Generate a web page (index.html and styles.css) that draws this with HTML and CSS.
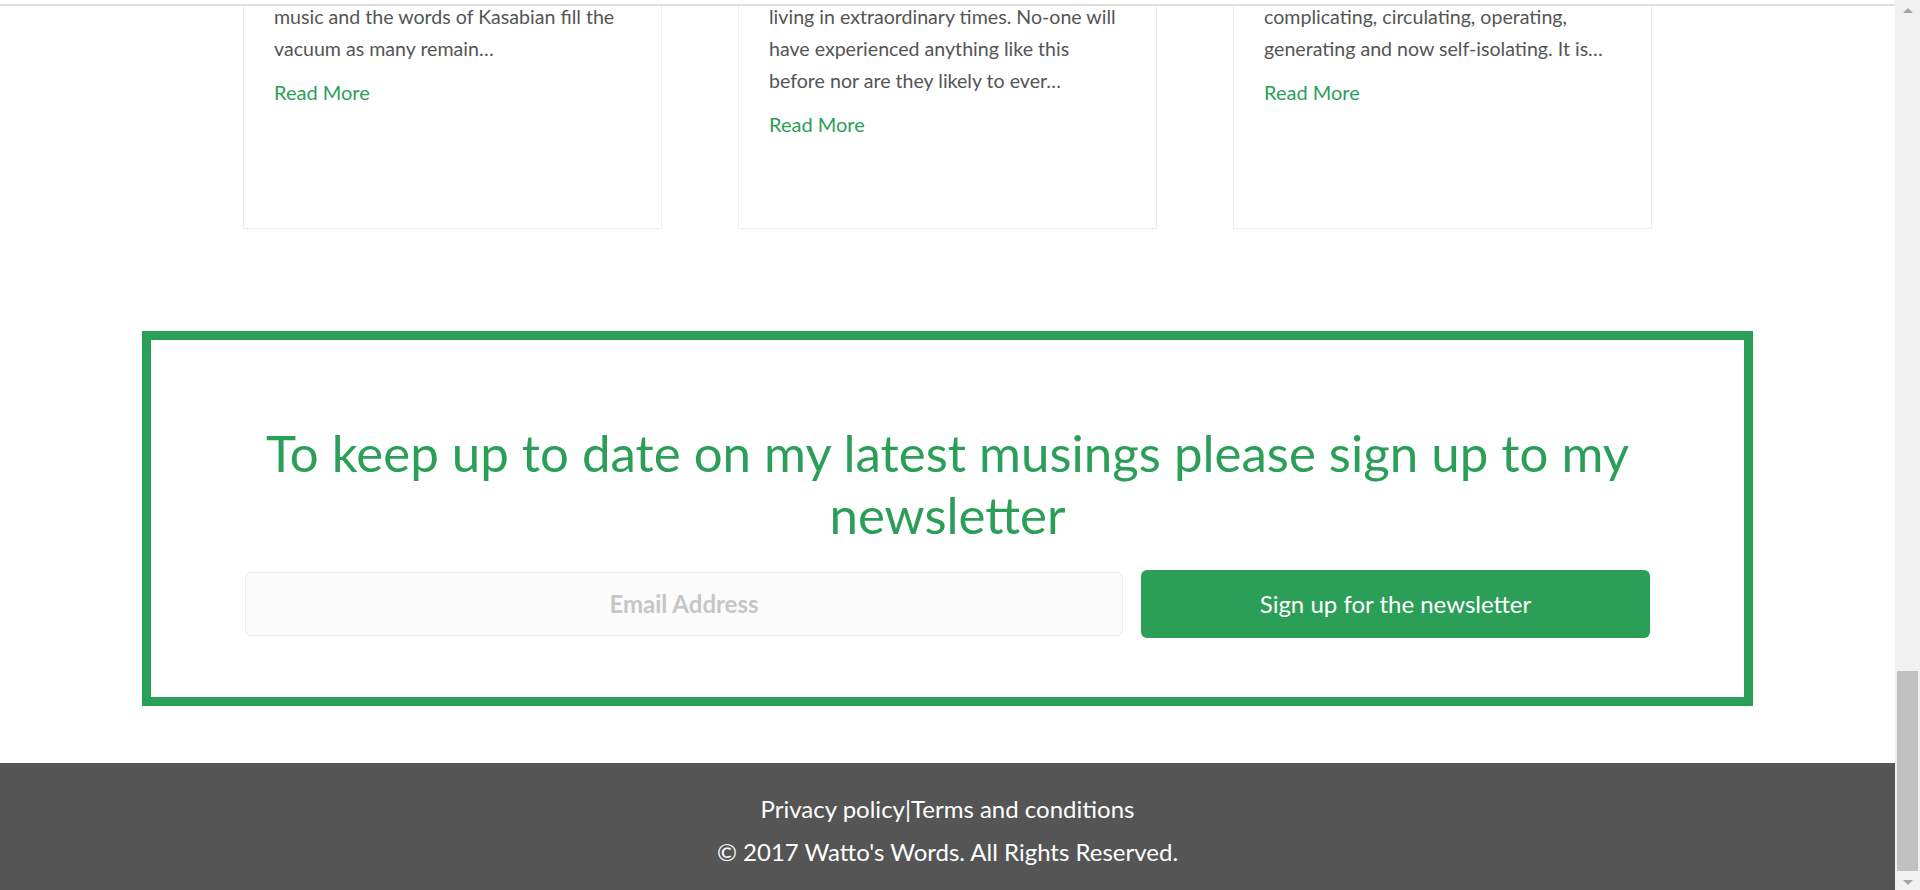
FILE: index.html
```html
<!DOCTYPE html>
<html lang="en">
<head>
<meta charset="utf-8">
<title>Watto's Words</title>
<link rel="stylesheet" href="styles.css">
</head>
<body>
<div class="topbar"></div>
<div class="scrollbar">
  <span class="arrow arrow-up"></span>
  <span class="track"><span class="thumb"></span></span>
  <span class="arrow arrow-down"></span>
</div>
<main class="page">
  <section class="posts">
    <article class="card">
      <p class="excerpt">music and the words of Kasabian fill the<br>vacuum as many remain…</p>
      <a class="more" href="#">Read More</a>
    </article>
    <article class="card">
      <p class="excerpt">living in extraordinary times. No-one will<br>have experienced anything like this<br>before nor are they likely to ever…</p>
      <a class="more" href="#">Read More</a>
    </article>
    <article class="card">
      <p class="excerpt">complicating, circulating, operating,<br>generating and now self-isolating. It is…</p>
      <a class="more" href="#">Read More</a>
    </article>
  </section>
  <section class="newsletter">
    <h2 class="newsletter-title">To keep up to date on my latest musings please sign up to my newsletter</h2>
    <form class="signup">
      <input class="email" type="email" placeholder="Email Address">
      <button class="submit" type="button">Sign up for the newsletter</button>
    </form>
  </section>
</main>
<footer class="footer">
  <p class="footer-links"><a href="#">Privacy policy</a>|<a href="#">Terms and conditions</a></p>
  <p class="copyright">© 2017 Watto's Words. All Rights Reserved.</p>
</footer>
</body>
</html>
```

FILE: styles.css
```css
html, body {
  margin: 0;
  padding: 0;
}
body {
  padding-right: 25px;
  font-family: Lato, "Open Sans", sans-serif;
  background: #ffffff;
  overflow: hidden;
}

.topbar {
  position: fixed;
  top: 0;
  left: 0;
  right: 25px;
  height: 4px;
  background: #ffffff;
  border-bottom: 2px solid #e0e0e0;
  z-index: 5;
}

.scrollbar {
  position: fixed;
  top: 0;
  right: 0;
  bottom: 0;
  width: 25px;
  background: #f1f1f1;
  display: flex;
  flex-direction: column;
  align-items: center;
  z-index: 6;
}
.arrow {
  width: 0;
  height: 0;
  border-left: 5px solid transparent;
  border-right: 5px solid transparent;
}
.arrow-up {
  margin-top: 8px;
  border-bottom: 5px solid #a3a3a3;
}
.arrow-down {
  margin-bottom: 5px;
  border-top: 5px solid #a3a3a3;
}
.track {
  flex: 1;
  align-self: stretch;
  display: flex;
  flex-direction: column;
  justify-content: flex-end;
  padding: 0 2px 9px;
}
.thumb {
  display: block;
  height: 200px;
  background: #c1c1c1;
}

.posts {
  display: flex;
  justify-content: center;
  gap: 76px;
}
.card {
  width: 419px;
  box-sizing: border-box;
  border: 1px solid #ececec;
  padding: 0 30px 88px;
}
.excerpt {
  margin: 0 0 11px;
  font-size: 19.6px;
  line-height: 32px;
  color: #555555;
}
.more {
  display: block;
  font-size: 20px;
  line-height: 32px;
  color: #2b9f58;
  text-decoration: none;
}

.newsletter {
  margin: 102px 142px 0;
  border: 9px solid #2b9f58;
  padding: 82px 94px 59px;
}
.newsletter-title {
  margin: 0;
  font-size: 51px;
  line-height: 62.4px;
  font-weight: 400;
  color: #2b9f58;
  text-align: center;
}
.signup {
  margin: 23px 0 0;
  display: grid;
  grid-template-columns: 878px 509px;
  gap: 18px;
  align-items: center;
}
.email {
  box-sizing: border-box;
  height: 64px;
  border: 1px solid #ececec;
  border-radius: 6px;
  background: #fbfbfb;
  font-family: Lato, sans-serif;
  font-size: 24px;
  font-weight: 700;
  text-align: center;
  color: #555;
  outline: none;
}
.email::placeholder {
  color: #c6c6c6;
}
.submit {
  height: 68px;
  border: 0;
  border-radius: 6px;
  background: #2b9f58;
  color: #ffffff;
  font-family: Lato, sans-serif;
  font-size: 24px;
  font-weight: 400;
}

.footer {
  margin-top: 57px;
  background: #555555;
  padding: 30px 0 22px;
  text-align: center;
  color: #ffffff;
  font-size: 24px;
  line-height: 32px;
}
.footer p {
  margin: 0;
}
.footer-links {
  margin-bottom: 11px !important;
}
.footer a {
  color: #ffffff;
  text-decoration: none;
}
```
